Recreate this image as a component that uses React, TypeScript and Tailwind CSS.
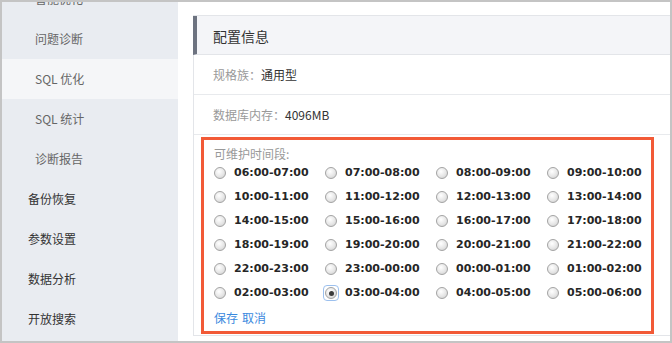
import React from "react";

const cjk = { fontFamily: '"Noto Sans CJK SC", "Noto Sans", sans-serif' };

const sideItems: { label: string; sub?: boolean; active?: boolean }[] = [
  { label: "智能优化", sub: true },
  { label: "问题诊断", sub: true },
  { label: "SQL 优化", sub: true, active: true },
  { label: "SQL 统计", sub: true },
  { label: "诊断报告", sub: true },
  { label: "备份恢复" },
  { label: "参数设置" },
  { label: "数据分析" },
  { label: "开放搜索" },
];

// 24 one-hour slots, starting at 06:00
const slots = Array.from({ length: 24 }, (_, i) => {
  const a = (i + 6) % 24;
  const b = (a + 1) % 24;
  const p = (n: number) => String(n).padStart(2, "0");
  return `${p(a)}:00-${p(b)}:00`;
});

function Radio({ checked }: { checked?: boolean }) {
  return (
    <span
      className={`relative flex h-[14px] w-[14px] shrink-0 items-center justify-center rounded-[3px] ${
        checked ? "outline outline-[1.5px] outline-[#9cc0ee]" : ""
      }`}
    >
      <span className="flex h-[12px] w-[12px] items-center justify-center rounded-full border border-[#a3a3a3] bg-[radial-gradient(circle_at_40%_35%,#ffffff,#e6e6e6_55%,#c9c9c9)]">
        {checked && <span className="h-[5px] w-[5px] rounded-full bg-[#3a3a3a]" />}
      </span>
    </span>
  );
}

export default function App() {
  return (
    <div className="flex h-[343px] w-[672px] overflow-hidden border-2 border-[#c4c4c4] bg-white" style={cjk}>
      <div className="w-[176px] shrink-0 overflow-hidden bg-[#e9ecf1]">
        <div className="mt-[-23px] flex flex-col">
          {sideItems.map((it) => (
            <div
              key={it.label}
              className={`flex h-[40px] items-center text-[12px] ${
                it.sub ? "pl-[33px] text-[#666]" : "pl-[26px] text-[#333]"
              } ${it.active ? "bg-[#f5f6f8]" : ""}`}
            >
              {it.label}
            </div>
          ))}
        </div>
      </div>

      <div className="flex-1 overflow-hidden pl-[15px] pt-[13px]">
        <div className="-mr-px flex h-[321px] flex-col border border-[#e3e5e9]">
          <div className="-ml-px flex h-[39px] items-center border-b border-l-4 border-b-[#e3e5e9] border-l-[#6d7380] bg-[#f4f5f8] pl-[16px] pt-[2px] text-[14px] text-[#333]">
            配置信息
          </div>
          <div className="flex h-[40px] items-center border-b border-[#e8eaed] pl-[19px] text-[12px]">
            <span className="text-[#999]">规格族：</span>
            <span className="text-[#333]">通用型</span>
          </div>
          <div className="flex h-[40px] items-center border-b border-[#e8eaed] pl-[19px] text-[12px]">
            <span className="text-[#999]">数据库内存：</span>
            <span className="text-[#333]">4096MB</span>
          </div>

          <div className="ml-[7px] mt-[2px] h-[197px] w-[453px] border-[3px] border-[#f25a37] pl-[10px] pt-[7px]">
            <div className="text-[12px] leading-[14px] text-[#999]">可维护时间段:</div>
            <div className="grid grid-cols-[111px_111px_111px_111px]">
              {slots.map((s) => (
                <label key={s} className="flex h-[24px] items-center gap-[7px] -ml-px">
                  <Radio checked={s === "03:00-04:00"} />
                  <span
                    className="text-[11px] font-bold text-[#262626]"
                    style={{ fontFamily: '"DejaVu Sans", sans-serif' }}
                  >
                    {s}
                  </span>
                </label>
              ))}
            </div>
            <div className="mt-[6px] flex gap-[4px] text-[12px] leading-[14px] text-[#3a89de]">
              <span>保存</span>
              <span>取消</span>
            </div>
          </div>
        </div>
      </div>
    </div>
  );
}
